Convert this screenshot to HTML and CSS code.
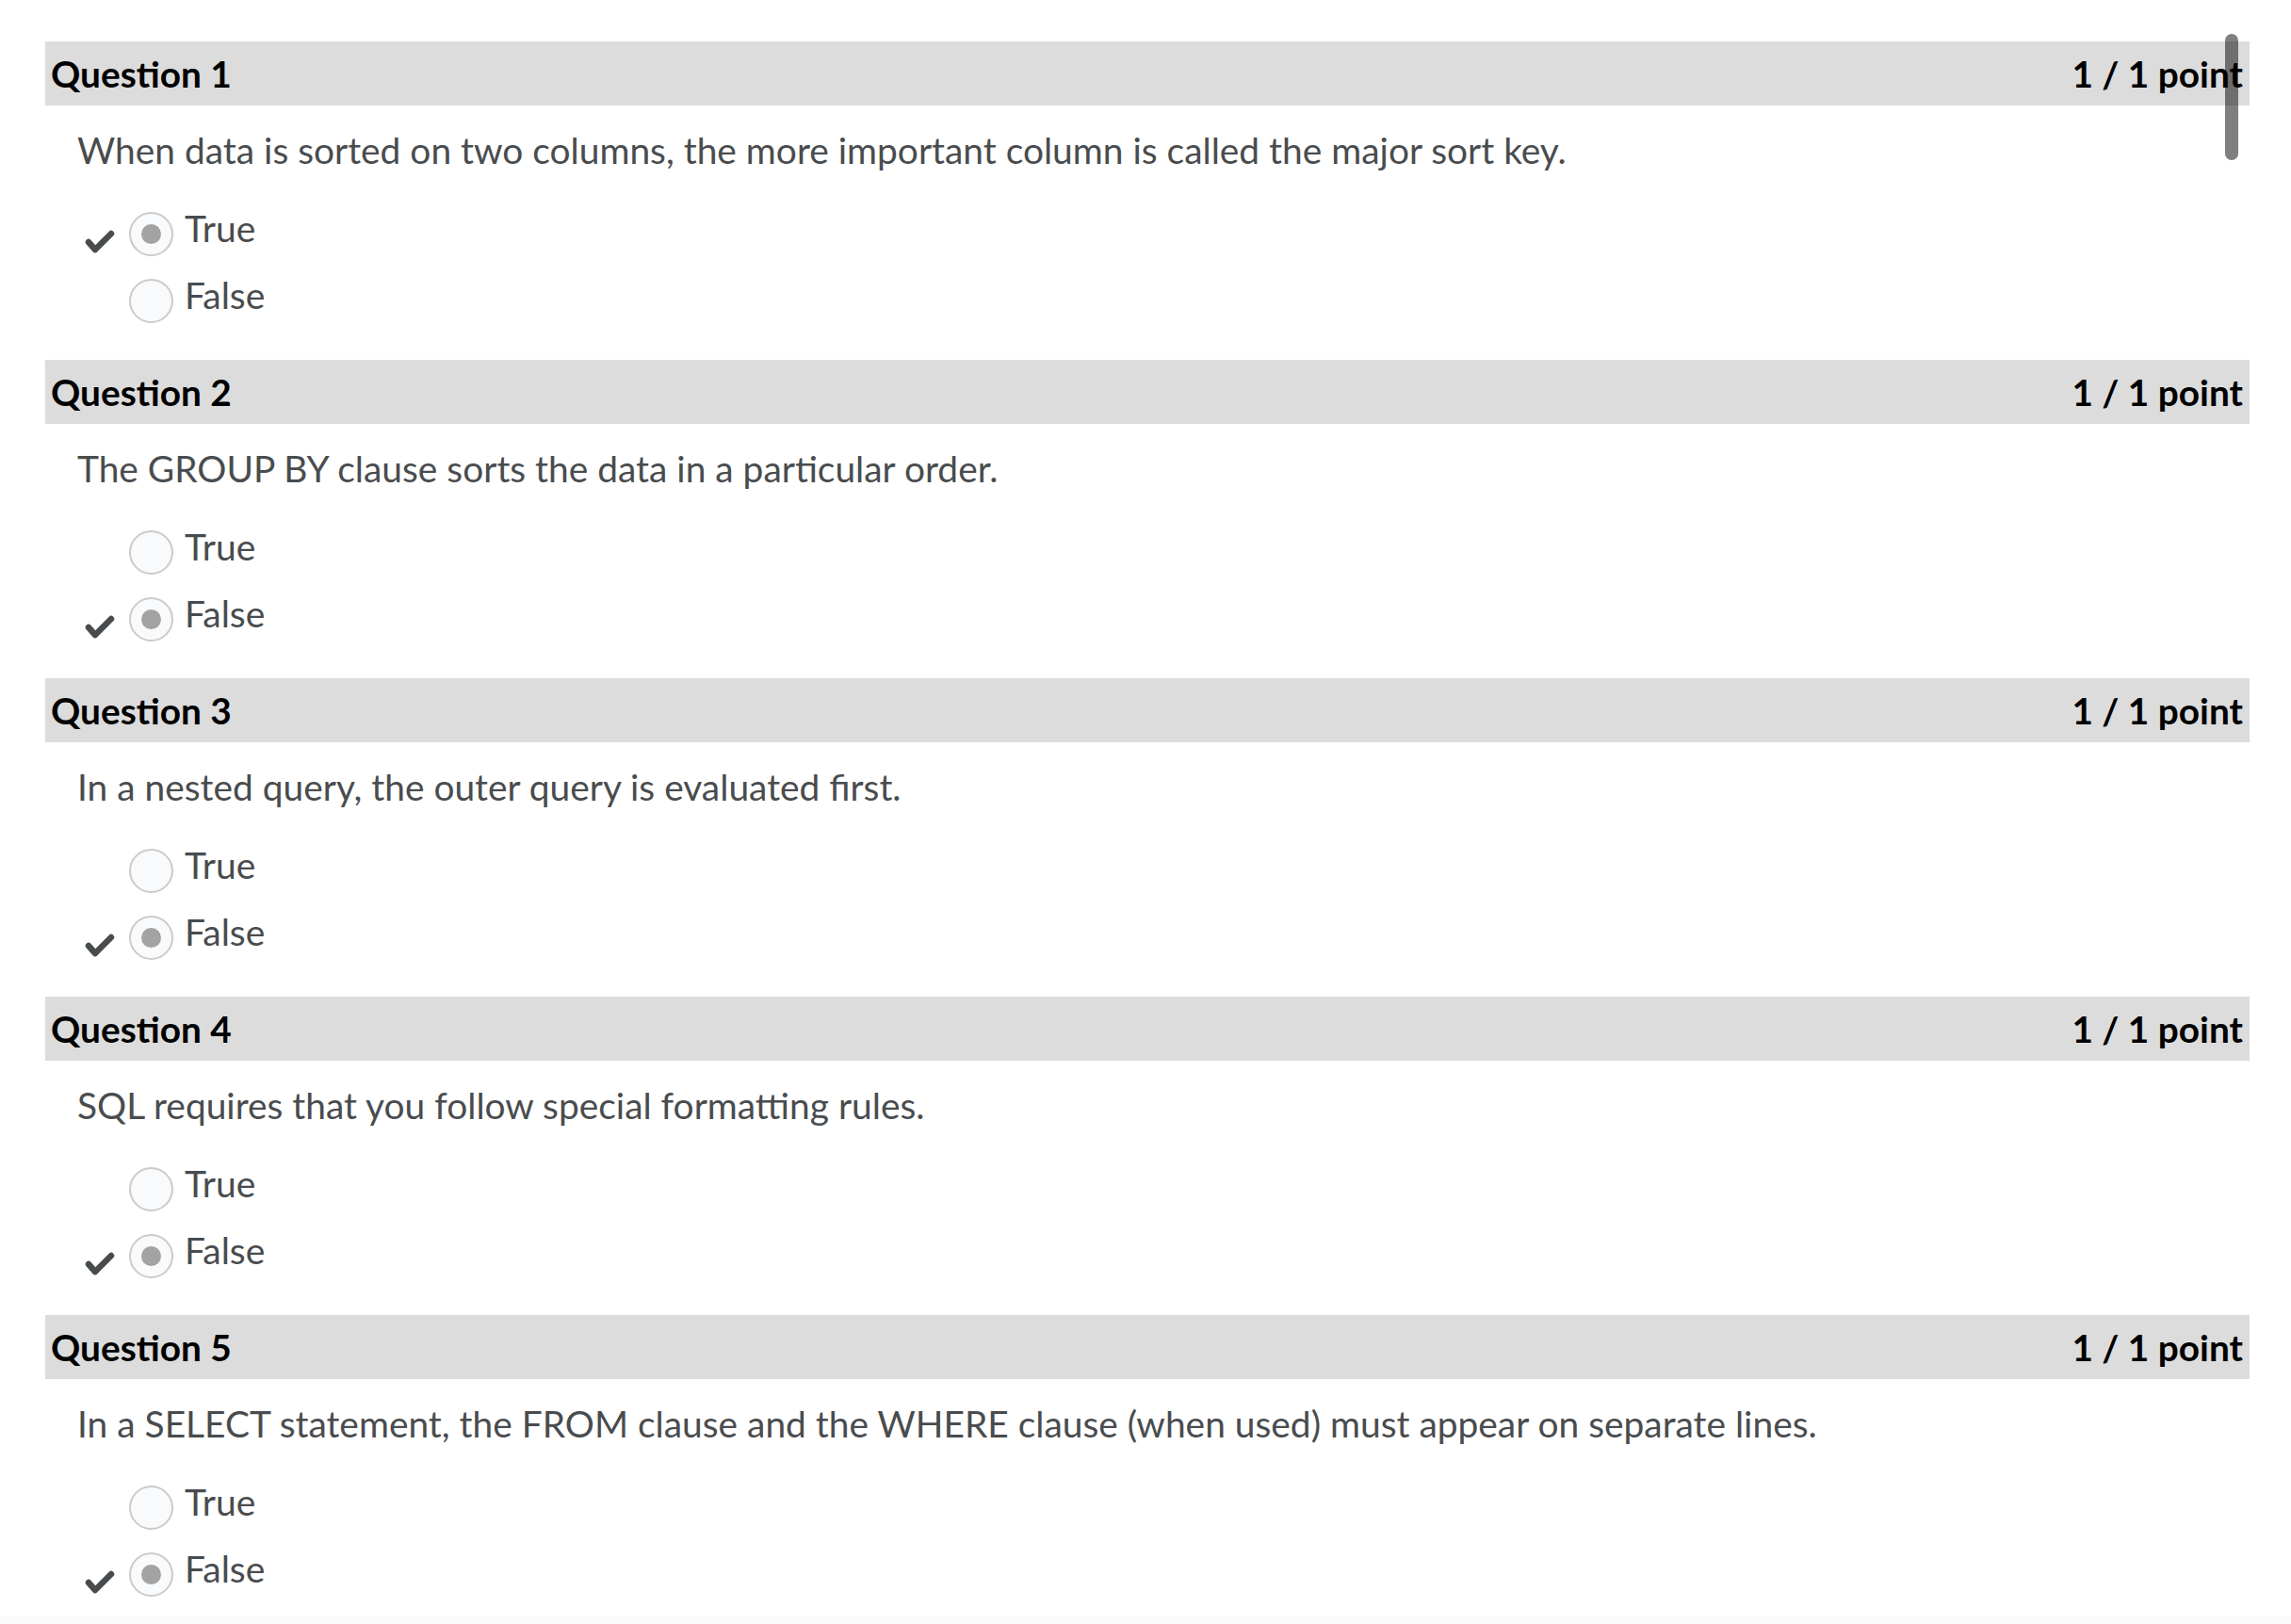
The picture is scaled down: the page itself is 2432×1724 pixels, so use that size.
FILE: index.html
```html
<!DOCTYPE html>
<html lang="en">
<head>
<meta charset="utf-8">
<title>Quiz results</title>
<link rel="stylesheet" href="styles.css">
</head>
<body>
<div class="page">
  <div class="questions">
    <section class="question">
      <div class="q-head"><span>Question 1</span><span>1 / 1 point</span></div>
      <div class="q-body">
        <p class="q-text">When data is sorted on two columns, the more important column is called the major sort key.</p>
        <div class="option"><span class="check"><svg width="32" height="25" viewBox="0 0 32 25"><path d="M4 13 L11 21 L28 4" /></svg></span><span class="radio selected"></span><span class="label">True</span></div>
        <div class="option"><span class="check"></span><span class="radio"></span><span class="label">False</span></div>
      </div>
    </section>
    <section class="question">
      <div class="q-head"><span>Question 2</span><span>1 / 1 point</span></div>
      <div class="q-body">
        <p class="q-text">The GROUP BY clause sorts the data in a particular order.</p>
        <div class="option"><span class="check"></span><span class="radio"></span><span class="label">True</span></div>
        <div class="option"><span class="check"><svg width="32" height="25" viewBox="0 0 32 25"><path d="M4 13 L11 21 L28 4" /></svg></span><span class="radio selected"></span><span class="label">False</span></div>
      </div>
    </section>
    <section class="question">
      <div class="q-head"><span>Question 3</span><span>1 / 1 point</span></div>
      <div class="q-body">
        <p class="q-text">In a nested query, the outer query is evaluated first.</p>
        <div class="option"><span class="check"></span><span class="radio"></span><span class="label">True</span></div>
        <div class="option"><span class="check"><svg width="32" height="25" viewBox="0 0 32 25"><path d="M4 13 L11 21 L28 4" /></svg></span><span class="radio selected"></span><span class="label">False</span></div>
      </div>
    </section>
    <section class="question">
      <div class="q-head"><span>Question 4</span><span>1 / 1 point</span></div>
      <div class="q-body">
        <p class="q-text">SQL requires that you follow special formatting rules.</p>
        <div class="option"><span class="check"></span><span class="radio"></span><span class="label">True</span></div>
        <div class="option"><span class="check"><svg width="32" height="25" viewBox="0 0 32 25"><path d="M4 13 L11 21 L28 4" /></svg></span><span class="radio selected"></span><span class="label">False</span></div>
      </div>
    </section>
    <section class="question last">
      <div class="q-head"><span>Question 5</span><span>1 / 1 point</span></div>
      <div class="q-body">
        <p class="q-text">In a SELECT statement, the FROM clause and the WHERE clause (when used) must appear on separate lines.</p>
        <div class="option"><span class="check"></span><span class="radio"></span><span class="label">True</span></div>
        <div class="option"><span class="check"><svg width="32" height="25" viewBox="0 0 32 25"><path d="M4 13 L11 21 L28 4" /></svg></span><span class="radio selected"></span><span class="label">False</span></div>
      </div>
    </section>
  </div>
  <div class="footer-band"></div>
  <div class="scroll-thumb"></div>
</div>
</body>
</html>
```

FILE: styles.css
```css
html, body {
  margin: 0;
  padding: 0;
  height: 1724px;
  overflow: hidden;
  background: #ffffff;
}

.page {
  position: relative;
  height: 1724px;
  font-family: Lato, "Open Sans", sans-serif;
  color: #494c4e;
}

.questions {
  padding: 44px 44px 0 48px;
}

.question {
  height: 338px;
}

.question.last {
  height: auto;
  padding-bottom: 3px;
}

.q-head {
  height: 68px;
  display: flex;
  align-items: center;
  justify-content: space-between;
  padding: 0 7px 0 6px;
  background: #dcdcdc;
  color: #000000;
  font-weight: 700;
  font-size: 38.8px;
  line-height: 46px;
}

.q-body {
  padding-left: 34px;
}

.q-text {
  margin: 24px 0 37px 0;
  font-size: 38.9px;
  line-height: 46px;
  font-weight: 400;
}

.option {
  display: flex;
  align-items: flex-start;
  height: 53px;
  margin-bottom: 18px;
}

.check {
  width: 55px;
  height: 53px;
  flex: none;
}

.check svg {
  display: block;
  margin: 25px 0 0 8px;
}

.check path {
  fill: none;
  stroke: #494c4e;
  stroke-width: 6.5;
  stroke-linecap: round;
  stroke-linejoin: round;
}

.radio {
  flex: none;
  box-sizing: border-box;
  width: 47px;
  height: 47px;
  margin-top: 6px;
  border: 2px solid #cbcbcb;
  border-radius: 50%;
  background: #f9fafb;
  display: flex;
  align-items: center;
  justify-content: center;
}

.radio.selected::after {
  content: "";
  width: 21px;
  height: 21px;
  border-radius: 50%;
  background: #a3a3a3;
}

.label {
  margin-left: 12px;
  font-size: 39px;
  line-height: 46px;
}

.footer-band {
  height: 40px;
  background: #fafafa;
}

.scroll-thumb {
  position: absolute;
  left: 2362px;
  top: 36px;
  width: 14px;
  height: 134px;
  border-radius: 7px;
  background: rgba(0, 0, 0, 0.5);
}
```
